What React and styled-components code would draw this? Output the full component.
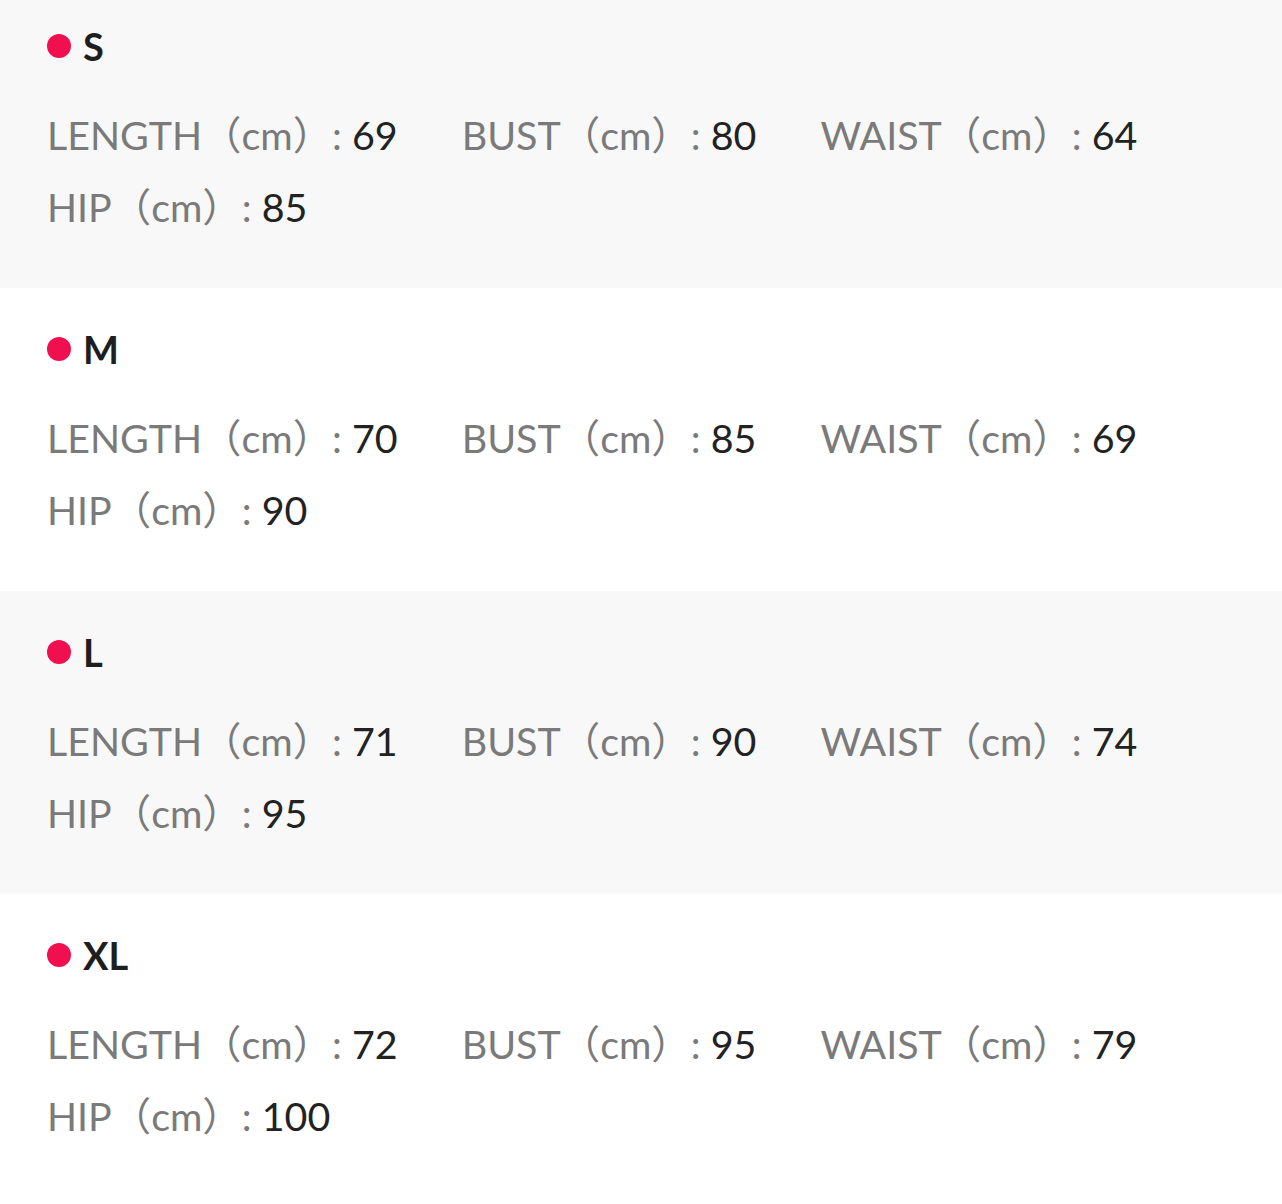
import styled, { createGlobalStyle } from "styled-components"

const sizes = [
  { name: "S", length: 69, bust: 80, waist: 64, hip: 85 },
  { name: "M", length: 70, bust: 85, waist: 69, hip: 90 },
  { name: "L", length: 71, bust: 90, waist: 74, hip: 95 },
  { name: "XL", length: 72, bust: 95, waist: 79, hip: 100 },
]

function App() {
  return (
    <>
      <GlobalStyle />
      <List>
        {sizes.map((s, i) => (
          <Section key={s.name} shaded={i % 2 === 0} first={i === 0}>
            <Header>
              <Dot />
              <SizeName>{s.name}</SizeName>
            </Header>
            <Measures>
              <Measure>
                <Label>LENGTH（cm）: </Label>
                <Value>{s.length}</Value>
              </Measure>
              <Measure>
                <Label>BUST（cm）: </Label>
                <Value>{s.bust}</Value>
              </Measure>
              <Measure>
                <Label>WAIST（cm）: </Label>
                <Value>{s.waist}</Value>
              </Measure>
              <Measure>
                <Label>HIP（cm）: </Label>
                <Value>{s.hip}</Value>
              </Measure>
            </Measures>
          </Section>
        ))}
      </List>
    </>
  )
}

const GlobalStyle = createGlobalStyle`
  body {
    margin: 0;
    background: #ffffff;
    font-family: Lato, "Noto Sans CJK SC", sans-serif;
  }
`

const List = styled.div`
  display: flex;
  flex-direction: column;
`

const Section = styled.div`
  background: ${(p) => (p.shaded ? "#f8f8f8" : "#ffffff")};
  padding: ${(p) => (p.first ? "22px" : "37px")} 47px 45px;
`

const Header = styled.div`
  display: flex;
  align-items: center;
  height: 48px;
  margin-bottom: 29px;
`

const Dot = styled.span`
  width: 24px;
  height: 24px;
  border-radius: 50%;
  background: #f0104f;
  margin-right: 12px;
  flex-shrink: 0;
`

const SizeName = styled.span`
  font-size: 38px;
  font-weight: 700;
  color: #1e1e1e;
  line-height: 48px;
`

const Measures = styled.div`
  display: flex;
  flex-wrap: wrap;
  column-gap: 64px;
`

const Measure = styled.div`
  line-height: 72px;
  font-size: 39.4px;
  white-space: nowrap;
`

const Label = styled.span`
  color: #7a7a7a;
`

const Value = styled.span`
  color: #222222;
`

export default App
